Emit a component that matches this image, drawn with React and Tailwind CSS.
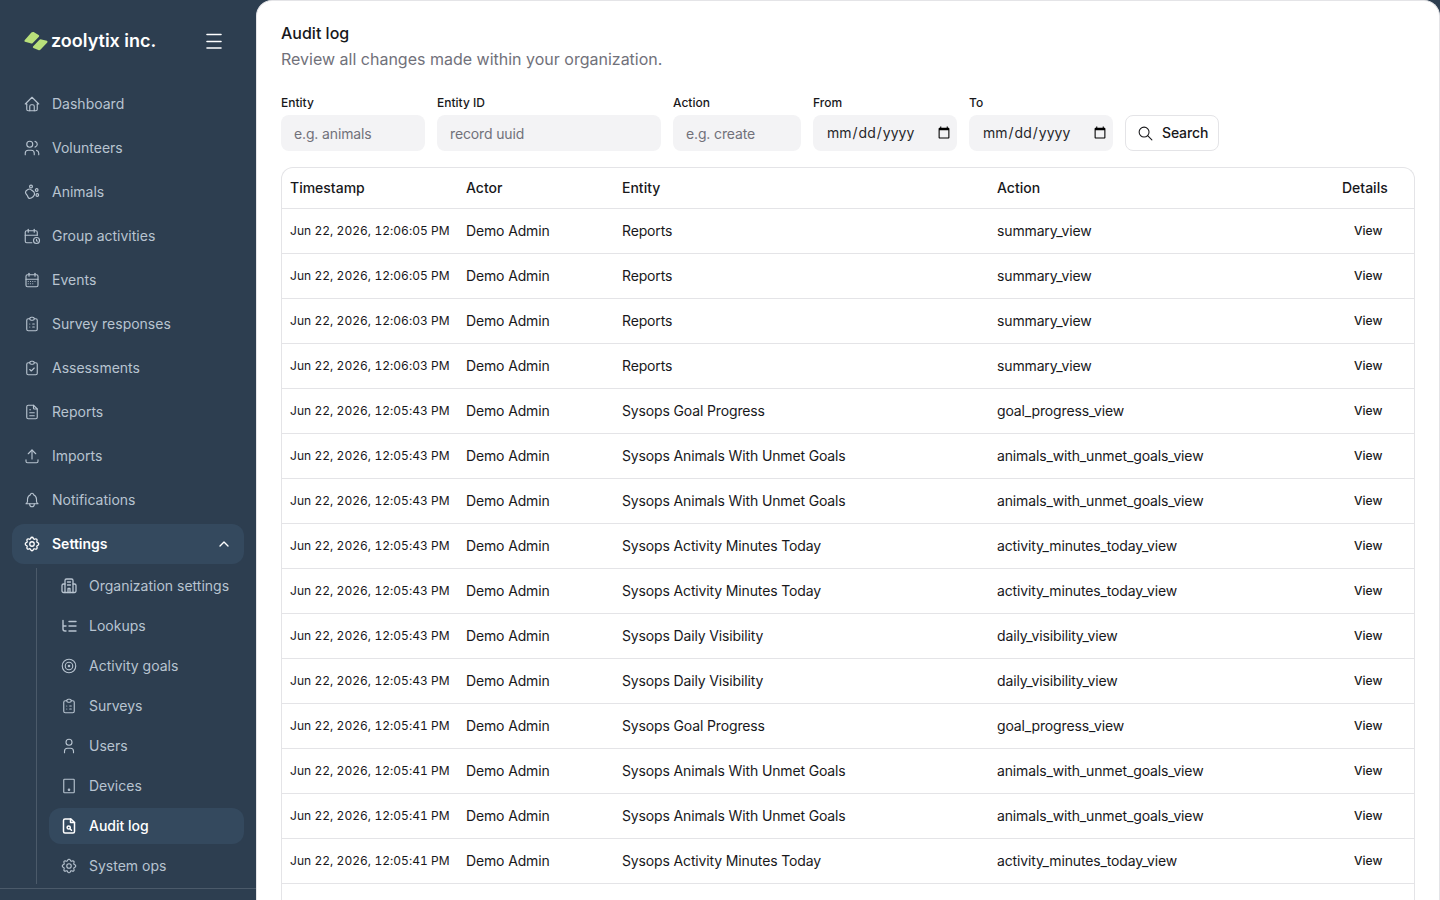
import {
  TbHome,
  TbUsers,
  TbCalendarTime,
  TbCalendarMonth,
  TbClipboardList,
  TbClipboardCheck,
  TbFileText,
  TbUpload,
  TbBell,
  TbSettings,
  TbChevronUp,
  TbTarget,
  TbUser,
  TbDeviceTablet,
  TbSearch,
} from "react-icons/tb";

function PawIcon({ size = 18 }) {
  return (
    <svg width={size} height={size} viewBox="0 0 18 18" fill="none" stroke="currentColor" strokeWidth="1.2">
      <circle cx="8" cy="3.6" r="1.4" />
      <circle cx="13.7" cy="7" r="1.3" />
      <circle cx="14.3" cy="12" r="1.3" />
      <path d="M4.8 6.5c1.6-1 3-.3 4 .8 1 .9 2.2 1.2 2.6 2.6.5 1.6-.2 3-1.3 3.8-1.2 1-2.6 2-4 1.6-1.2-.3-1.2-1.8-1.8-2.8-.6-1-1.6-1.6-1.8-3-.2-1.3.9-2.2 2.3-3Z" />
    </svg>
  );
}

function BuildingIcon({ size = 18 }) {
  return (
    <svg width={size} height={size} viewBox="0 0 18 18" fill="none" stroke="currentColor" strokeWidth="1.3" strokeLinecap="round" strokeLinejoin="round">
      <path d="M5 15.5V3.5A1.5 1.5 0 0 1 6.5 2h5A1.5 1.5 0 0 1 13 3.5v12" />
      <path d="M5 7H3.5A1.5 1.5 0 0 0 2 8.5v5.5a1.5 1.5 0 0 0 1.5 1.5h11a1.5 1.5 0 0 0 1.5-1.5V8.5A1.5 1.5 0 0 0 14.500 7H13" />
      <path d="M7.500 5h3M7.500 8h3M8 15.500V11.500h2v4" />
    </svg>
  );
}

function LookupsIcon({ size = 18 }) {
  return (
    <svg width={size} height={size} viewBox="0 0 18 18" fill="none" stroke="currentColor" strokeWidth="1.4" strokeLinecap="round" strokeLinejoin="round">
      <path d="M3 3.500v8.500a2 2 0 0 0 2 2h1M3 9h3M9 4.500h7M9 9h7M9 14h7" />
    </svg>
  );
}

function AuditIcon({ size = 18 }) {
  return (
    <svg width={size} height={size} viewBox="0 0 18 18" fill="none" stroke="currentColor" strokeWidth="1.5" strokeLinecap="round" strokeLinejoin="round">
      <path d="M3.500 3.500A1.500 1.500 0 0 1 5 2h6l3.500 3.500v9a1.500 1.500 0 0 1-1.500 1.500H5a1.500 1.500 0 0 1-1.500-1.500Z" />
      <path d="M10.500 2v3.500h4" />
      <circle cx="8.700" cy="10.500" r="1.600" />
      <path d="M10 11.800l1.500 1.500" />
    </svg>
  );
}

function MenuIcon() {
  return (
    <svg width="16" height="16" viewBox="0 0 16 16" fill="none" stroke="currentColor" strokeWidth="1.6" strokeLinecap="round" className="text-white">
      <path d="M1 1.500h14M1 8.500h14M1 15h14" />
    </svg>
  );
}

const NAV = [
  ["Dashboard", TbHome],
  ["Volunteers", TbUsers],
  ["Animals", PawIcon],
  ["Group activities", TbCalendarTime],
  ["Events", TbCalendarMonth],
  ["Survey responses", TbClipboardList],
  ["Assessments", TbClipboardCheck],
  ["Reports", TbFileText],
  ["Imports", TbUpload],
  ["Notifications", TbBell],
];

const SUB_NAV = [
  ["Organization settings", BuildingIcon],
  ["Lookups", LookupsIcon],
  ["Activity goals", TbTarget],
  ["Surveys", TbClipboardList],
  ["Users", TbUser],
  ["Devices", TbDeviceTablet],
  ["Audit log", AuditIcon, true],
  ["System ops", TbSettings],
];

const ROWS = [
  ["Jun 22, 2026, 12:06:05 PM", "Reports", "summary_view"],
  ["Jun 22, 2026, 12:06:05 PM", "Reports", "summary_view"],
  ["Jun 22, 2026, 12:06:03 PM", "Reports", "summary_view"],
  ["Jun 22, 2026, 12:06:03 PM", "Reports", "summary_view"],
  ["Jun 22, 2026, 12:05:43 PM", "Sysops Goal Progress", "goal_progress_view"],
  ["Jun 22, 2026, 12:05:43 PM", "Sysops Animals With Unmet Goals", "animals_with_unmet_goals_view"],
  ["Jun 22, 2026, 12:05:43 PM", "Sysops Animals With Unmet Goals", "animals_with_unmet_goals_view"],
  ["Jun 22, 2026, 12:05:43 PM", "Sysops Activity Minutes Today", "activity_minutes_today_view"],
  ["Jun 22, 2026, 12:05:43 PM", "Sysops Activity Minutes Today", "activity_minutes_today_view"],
  ["Jun 22, 2026, 12:05:43 PM", "Sysops Daily Visibility", "daily_visibility_view"],
  ["Jun 22, 2026, 12:05:43 PM", "Sysops Daily Visibility", "daily_visibility_view"],
  ["Jun 22, 2026, 12:05:41 PM", "Sysops Goal Progress", "goal_progress_view"],
  ["Jun 22, 2026, 12:05:41 PM", "Sysops Animals With Unmet Goals", "animals_with_unmet_goals_view"],
  ["Jun 22, 2026, 12:05:41 PM", "Sysops Animals With Unmet Goals", "animals_with_unmet_goals_view"],
  ["Jun 22, 2026, 12:05:41 PM", "Sysops Activity Minutes Today", "activity_minutes_today_view"],
];

function Logo() {
  return (
    <svg width="24" height="20" viewBox="0 0 24 20" className="shrink-0">
      <path d="M0.6 9.200 L7.400 1.600 Q8.400 0.600 9.600 1 L14.600 4 Q15.800 4.800 14.900 5.800 L8.800 12 Q7.800 13 6.500 12.300 L1 10.800 Q0 10.200 0.6 9.200Z" fill="#b9e07a" />
      <path d="M9 15.600 L15.200 9 Q16.200 8 17.500 8.400 L22.900 9.800 Q24 10.400 23.300 11.400 L16.600 18.600 Q15.600 19.600 14.300 19 L9.400 17 Q8.400 16.500 9 15.600Z" fill="#b9e07a" />
    </svg>
  );
}

function Field({ label, width, children }) {
  return (
    <label className={`flex flex-col gap-1 ${width}`}>
      <span className="text-xs font-medium leading-4 text-[#18181b]">{label}</span>
      {children}
    </label>
  );
}

const inputClass =
  "h-9 w-full rounded-lg bg-[#f3f3f5] px-[13px] text-sm tracking-[-0.01em] text-[#27272a] outline-none placeholder:text-[#71717a]";

export default function App() {
  return (
    <div className="flex h-screen overflow-hidden bg-[#2d3e50] font-['Inter',sans-serif]">
      <aside className="flex w-64 shrink-0 flex-col">
        <div className="flex h-[84px] shrink-0 items-center justify-between pb-0.5 pl-6 pr-[34px]">
          <div className="flex items-center gap-[3px]">
            <Logo />
            <span className="text-lg font-semibold text-white">zoolytix inc.</span>
          </div>
          <MenuIcon />
        </div>

        <div className="mb-[11px] flex min-h-0 flex-1 flex-col overflow-hidden border-b border-[#4b5a6a]">
          <nav className="flex flex-col gap-1 px-3">
            {NAV.map(([name, Icon]) => (
              <div key={name} className="flex h-10 items-center gap-[11px] pl-[11px] pr-3 text-sm text-[#b8c4d0]">
                <Icon size={18} strokeWidth={1.5} />
                {name}
              </div>
            ))}
            <div className="flex h-10 items-center gap-[11px] rounded-xl bg-[#34495e] pl-[11px] pr-3 text-sm font-semibold text-white">
              <TbSettings size={18} strokeWidth={1.7} />
              <span className="flex-1">Settings</span>
              <TbChevronUp size={16} strokeWidth={2} />
            </div>
            <div className="ml-6 flex flex-col gap-1 border-l border-[#4b5a6a] pl-3">
              {SUB_NAV.map(([name, Icon, active]) => (
                <div
                  key={name}
                  className={`flex h-9 items-center gap-[11px] rounded-xl pl-[11px] pr-3 text-sm ${
                    active ? "bg-[#34495e] font-medium text-white" : "text-[#b8c4d0]"
                  }`}
                >
                  <Icon size={18} strokeWidth={1.5} />
                  {name}
                </div>
              ))}
            </div>
          </nav>
        </div>
      </aside>

      <main className="flex min-w-0 flex-1 flex-col overflow-hidden rounded-t-2xl border border-b-0 border-[#e4e4e7] bg-white px-6 pt-6">
        <h1 className="text-base font-medium leading-[17px] text-[#18181b]">Audit log</h1>
        <p className="mt-[5px] text-base leading-6 text-[#71717a]">Review all changes made within your organization.</p>

        <div className="mt-6 flex items-end gap-3">
          <Field label="Entity" width="w-36">
            <input className={inputClass} placeholder="e.g. animals" />
          </Field>
          <Field label="Entity ID" width="w-56">
            <input className={inputClass} placeholder="record uuid" />
          </Field>
          <Field label="Action" width="w-32">
            <input className={inputClass} placeholder="e.g. create" />
          </Field>
          <Field label="From" width="w-36">
            <input type="date" className={`${inputClass} pr-1 tracking-normal`} />
          </Field>
          <Field label="To" width="w-36">
            <input type="date" className={`${inputClass} pr-1 tracking-normal`} />
          </Field>
          <button className="flex h-9 w-[94px] items-center gap-2 rounded-lg border border-[#e4e4e7] bg-white pl-[11px] text-sm font-medium tracking-[-0.01em] text-[#18181b]">
            <TbSearch size={17} strokeWidth={1.5} />
            Search
          </button>
        </div>

        <div className="mt-4 min-h-0 flex-1 overflow-hidden rounded-t-xl border border-b-0 border-[#e4e4e7]">
          <table className="w-full table-fixed text-sm tracking-[-0.01em] text-[#18181b]">
            <colgroup>
              <col className="w-[176px]" />
              <col className="w-[156px]" />
              <col className="w-[375px]" />
              <col className="w-[345px]" />
              <col />
            </colgroup>
            <thead>
              <tr className="h-10 border-b border-[#e4e4e7]">
                {["Timestamp", "Actor", "Entity", "Action", "Details"].map((h) => (
                  <th key={h} className="px-2 text-left font-medium tracking-normal">
                    {h}
                  </th>
                ))}
              </tr>
            </thead>
            <tbody>
              {ROWS.map((row, i) => (
                <tr key={i} className="h-[45px] border-b border-[#e4e4e7]">
                  <td className="whitespace-nowrap px-2 text-xs tabular-nums tracking-[0.04px]">{row[0]}</td>
                  <td className="px-2">Demo Admin</td>
                  <td className="px-2">{row[1]}</td>
                  <td className="px-2">{row[2]}</td>
                  <td className="px-2">
                    <button className="block px-3 text-xs font-medium tracking-normal">View</button>
                  </td>
                </tr>
              ))}
            </tbody>
          </table>
        </div>
      </main>
    </div>
  );
}
